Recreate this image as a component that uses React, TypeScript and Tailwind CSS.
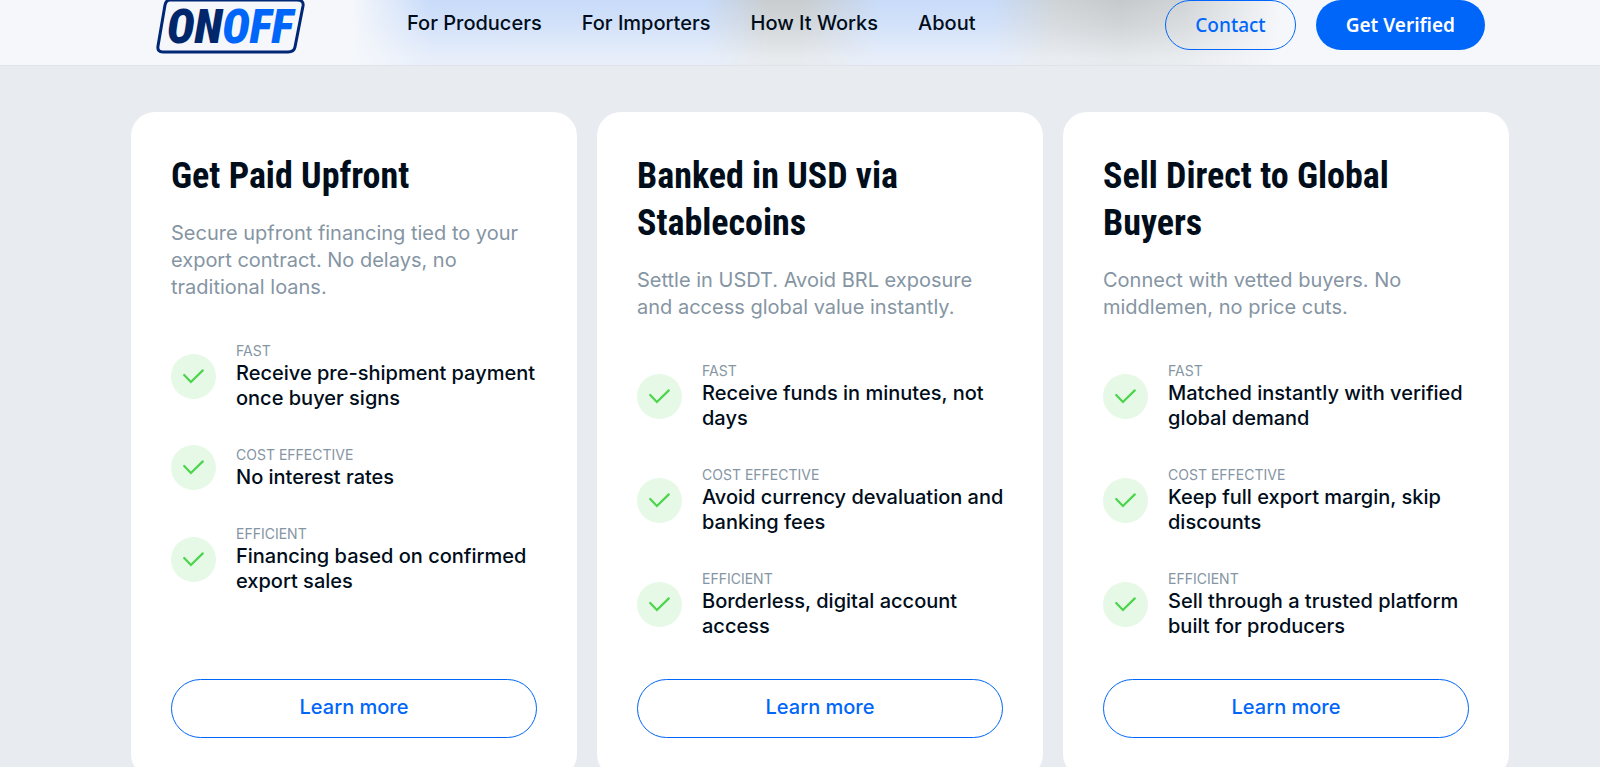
const navLinks = ["For Producers", "For Importers", "How It Works", "About"];

const cards = [
  {
    title: "Get Paid Upfront",
    description: "Secure upfront financing tied to your export contract. No delays, no traditional loans.",
    features: [
      { label: "FAST", text: "Receive pre-shipment payment once buyer signs" },
      { label: "COST EFFECTIVE", text: "No interest rates" },
      { label: "EFFICIENT", text: "Financing based on confirmed export sales" },
    ],
  },
  {
    title: "Banked in USD via Stablecoins",
    description: "Settle in USDT. Avoid BRL exposure and access global value instantly.",
    features: [
      { label: "FAST", text: "Receive funds in minutes, not days" },
      { label: "COST EFFECTIVE", text: "Avoid currency devaluation and banking fees" },
      { label: "EFFICIENT", text: "Borderless, digital account access" },
    ],
  },
  {
    title: "Sell Direct to Global Buyers",
    description: "Connect with vetted buyers. No middlemen, no price cuts.",
    features: [
      { label: "FAST", text: "Matched instantly with verified global demand" },
      { label: "COST EFFECTIVE", text: "Keep full export margin, skip discounts" },
      { label: "EFFICIENT", text: "Sell through a trusted platform built for producers" },
    ],
  },
];

function Logo() {
  return (
    <svg width="150" height="56" viewBox="0 0 150 56" role="img" aria-label="ONOFF">
      <path
        d="M15 0 H142 Q149 0 148 6 L140 47 Q139 52 133 52 H8 Q2 52 3 46 L10 5 Q11 0 15 0 Z"
        fill="none"
        stroke="#002776"
        strokeWidth="3"
      />
      <text
        x="12"
        y="43"
        fontFamily="'Roboto Condensed', Roboto, sans-serif"
        fontSize="47"
        fontWeight="900"
        fontStyle="italic"
        fill="#00266b"
      >
        ON<tspan fill="#0066fa">OFF</tspan>
      </text>
    </svg>
  );
}

function CheckMark() {
  return (
    <svg className="size-[45px] shrink-0" viewBox="0 0 45 45" fill="none" aria-hidden="true">
      <circle cx="22.5" cy="22.5" r="22.5" fill="#e6f8e6" />
      <path d="M13.2 21 L19.9 28 L31.8 16.4" stroke="#4cd44c" strokeWidth="2.2" strokeLinecap="round" />
    </svg>
  );
}

export default function App() {
  return (
    <div className="min-h-screen overflow-hidden bg-[#e8ebf0] font-['Inter',sans-serif] text-[#000d1a]">
      <header className="flex h-[66px] items-start border-b border-[#e0e3e9] bg-[#f5f7fb] bg-[linear-gradient(to_bottom,transparent_0%,rgba(245,247,251,0.25)_40%,rgba(245,247,251,0.7)_90%),linear-gradient(to_right,#f5f7fb_22%,#c8dbf9_27%,#c8dbf9_44%,#c9cdcf_48%,#c9cdcf_50%,#c8dbf9_55%,#c8dbf9_62%,#ced3d6_66%,#c5c9cb_70%,#d0d4d6_74%,#f5f7fb_80%)] pr-[115px] pl-[155px]">
        <a href="#" className="shrink-0">
          <Logo />
        </a>
        <nav className="ml-[102px] flex gap-10 pt-[9px] text-[20px] leading-7 font-medium whitespace-nowrap">
          {navLinks.map((link) => (
            <a key={link} href="#">
              {link}
            </a>
          ))}
        </nav>
        <div className="ml-auto flex gap-5 font-['Noto_Sans',sans-serif] text-[19px] whitespace-nowrap">
          <button className="h-[50px] rounded-full border border-[#0066fa] px-[29px] font-medium text-[#0066fa]">Contact</button>
          <button className="h-[50px] rounded-full bg-[#0066fa] px-[30px] font-semibold text-white">Get Verified</button>
        </div>
      </header>

      <main className="grid grid-cols-3 gap-5 pt-[46px] pr-[91px] pl-[131px]">
        {cards.map((card) => (
          <section key={card.title} className="flex flex-col rounded-3xl bg-white px-10 pt-[41px] pb-10">
            <h2 className="font-['Roboto_Condensed',Roboto,sans-serif] text-[36px] leading-[47px] font-bold">
              {card.title}
            </h2>
            <p className="mt-5 text-[20px] leading-[27px] text-[#8595a3]">{card.description}</p>
            <ul className="mt-10 mb-10 flex flex-col gap-[34px]">
              {card.features.map((feature) => (
                <li key={feature.label} className="-mr-2 flex items-center gap-5">
                  <CheckMark />
                  <div>
                    <div className="text-[14px] leading-5 text-[#8595a3]">{feature.label}</div>
                    <div className="text-[20px] leading-[25px] font-medium">{feature.text}</div>
                  </div>
                </li>
              ))}
            </ul>
            <button className="mt-auto h-[59px] shrink-0 rounded-full border border-[#0066fa] pb-1 text-[20px] font-medium text-[#0066fa]">
              Learn more
            </button>
          </section>
        ))}
      </main>
    </div>
  );
}
